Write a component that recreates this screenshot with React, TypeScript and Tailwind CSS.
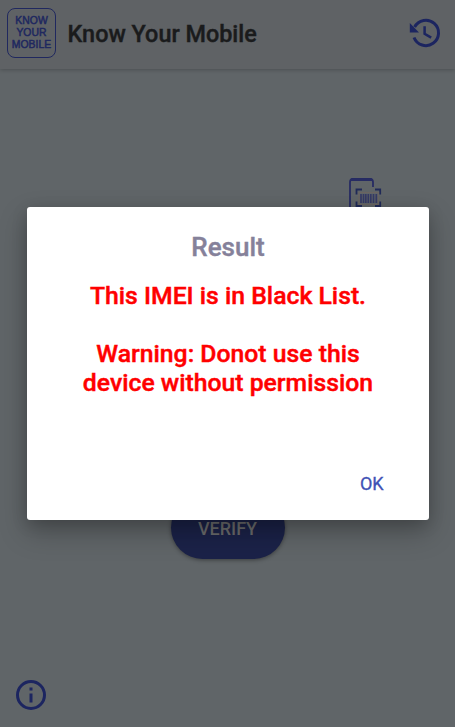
import React from "react";

function HistoryIcon() {
  return (
    <svg className="h-[36px] w-[36px]" viewBox="0 0 36 36" fill="none">
      <path d="M8.6 12A12.7 12.7 0 1 1 8 22.5" stroke="#1c2560" strokeWidth="3" />
      <path d="M3.8 8V17.4H13Z" fill="#1c2560" />
      <path d="M18.6 11.2V18.8L25.2 22.6" stroke="#1c2560" strokeWidth="2.5" />
    </svg>
  );
}

function PhoneScanIcon() {
  return (
    <svg className="h-[62px] w-[34px]" viewBox="0 0 34 62" fill="none">
      <path d="M25 10V5Q25 2 22.5 2H4.5Q2 2 2 5V56Q2 59 4.5 59H22.5Q25 59 25 56V32" stroke="#272c63" strokeWidth="1.8" />
      <path d="M3 2.7H24" stroke="#272c63" strokeWidth="2.6" />
      <path d="M8.5 17.5V12.5H14M27 12.5H32.2V17.5M8.5 24.5V29H14M27 29H32.2V24.5" stroke="#202a58" strokeWidth="1.8" />
      <path d="M11 15.5H30.5V27.5H11Z" stroke="#6b6461" strokeWidth="1.2" />
      <path d="M13 17V26M15.5 17V26M17.8 17V26M20.3 17V26M22.8 17V26M25.5 17V26M28.3 17V26" stroke="#353a65" strokeWidth="1.7" />
    </svg>
  );
}

function InfoIcon() {
  return (
    <svg className="h-[36px] w-[36px]" viewBox="0 0 24 24" fill="#1c2560">
      <path d="M11 7h2v2h-2zm0 4h2v6h-2zm1-9a10 10 0 1 0 0 20 10 10 0 0 0 0-20zm0 18a8 8 0 1 1 0-16 8 8 0 0 1 0 16z" />
    </svg>
  );
}

export default function App() {
  return (
    <div className="relative flex h-[727px] w-[455px] flex-col overflow-hidden bg-[#606568] font-[Roboto,sans-serif]">
      <header className="flex h-[69px] shrink-0 items-start bg-[#5f6265] pl-[7px] pr-[13px] shadow-[0_1px_4px_rgba(0,0,0,0.22)]">
        <div className="mt-2 flex h-[50px] w-[49px] flex-col items-center justify-center rounded-[8px] border-[1.5px] border-[#20285f] text-center font-['Liberation_Sans',sans-serif] text-[10.4px] leading-[12px] tracking-[0.05px] text-[#20285f] [-webkit-text-stroke:0.5px_#20285f]">
          <span>KNOW</span>
          <span>YOUR</span>
          <span>MOBILE</span>
        </div>
        <h1 className="ml-[11.5px] mt-[18px] whitespace-nowrap text-[23.4px] font-medium leading-8 text-[#1a1b1c] [-webkit-text-stroke:0.4px_#1a1b1c]">Know Your Mobile</h1>
        <div className="ml-auto mt-[15px]">
          <HistoryIcon />
        </div>
      </header>

      <main className="flex grow flex-col">
        <div className="flex h-[427px] justify-end pr-[73px] pt-[108px]">
          <PhoneScanIcon />
        </div>
        <button className="flex h-[63px] w-[114px] items-center justify-center self-center rounded-[32px] bg-[#1b2248] pt-[2px] text-[18px] font-medium text-[#6b6c6c] shadow-[0_1px_4px_rgba(0,0,0,0.4)]">
          VERIFY
        </button>
      </main>

      <footer className="flex h-[50px] items-start pl-[13px]">
        <InfoIcon />
      </footer>

      <section
        role="dialog"
        className="absolute left-[27.4px] top-[207.4px] flex h-[312.4px] w-[401.2px] flex-col rounded-[3px] bg-white text-center shadow-[0_12px_28px_rgba(0,0,0,0.25),0_4px_16px_rgba(0,0,0,0.15)]"
      >
        <h2 className="mt-[24px] text-[26px] font-medium leading-8 text-[#85819a] [-webkit-text-stroke:0.4px_#85819a]">Result</h2>
        <div className="mt-[17.6px] text-[24.75px] font-medium leading-[29px] text-[#ff0000] [-webkit-text-stroke:0.45px_#ff0000]">
          <p>This IMEI is in Black List.</p>
          <p className="mt-[29px]">
            Warning: Donot use this
            <br />
            device without permission
          </p>
        </div>
        <button className="mb-[24px] mr-[45px] mt-auto self-end text-[18px] leading-6 text-[#3f51b5] [-webkit-text-stroke:0.3px_#3f51b5]">OK</button>
      </section>
    </div>
  );
}
